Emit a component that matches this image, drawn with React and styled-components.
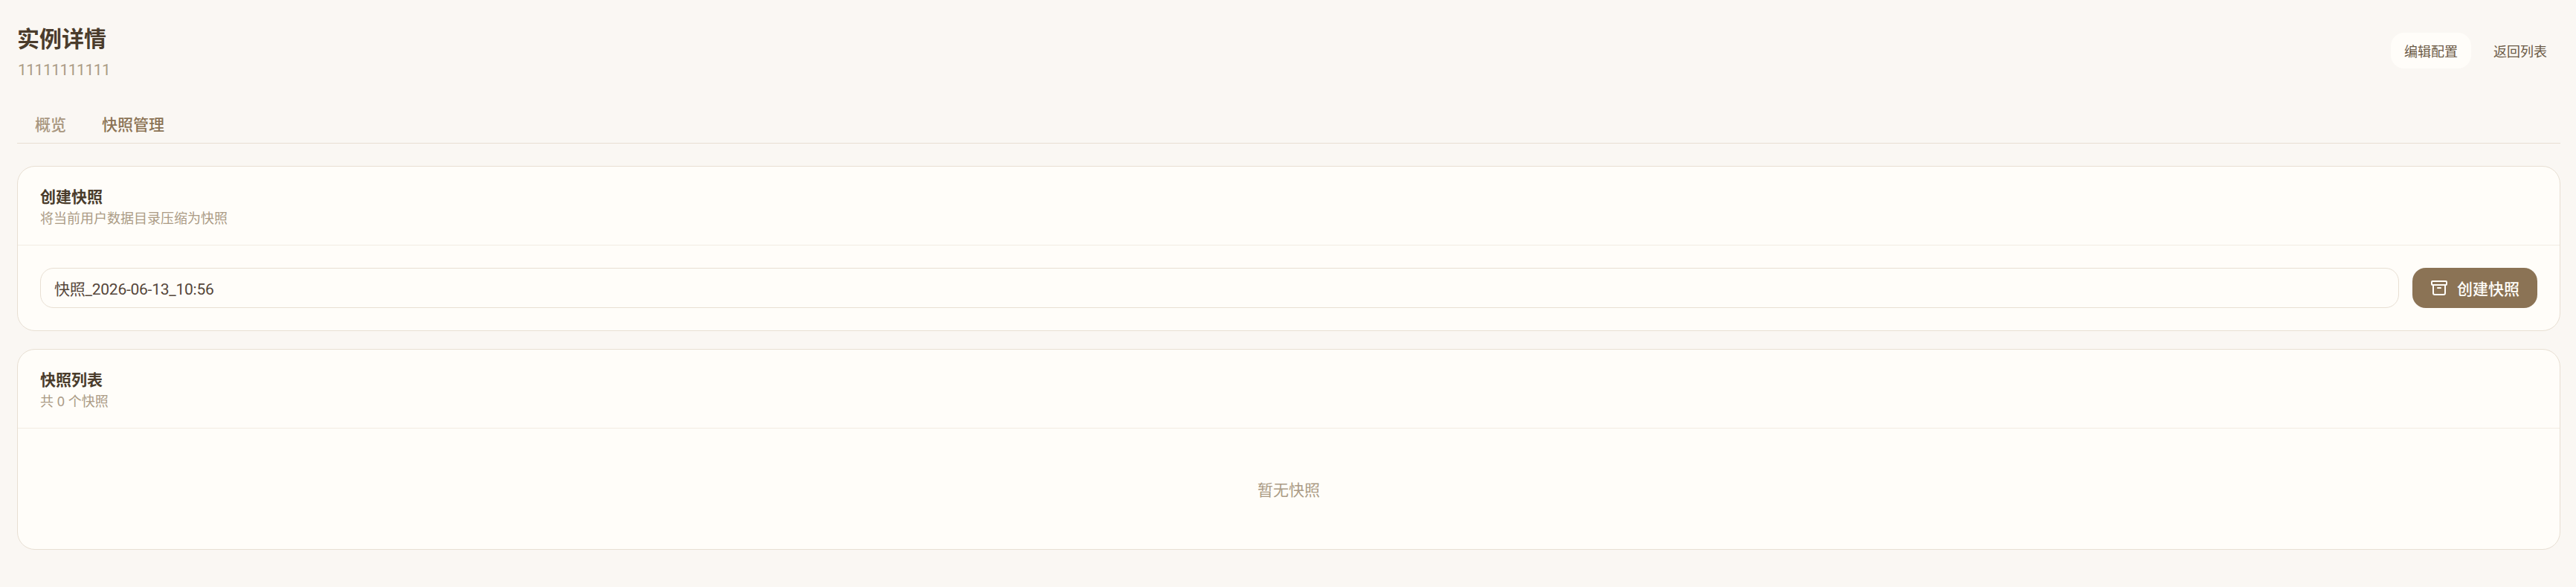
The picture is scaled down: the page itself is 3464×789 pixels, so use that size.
import React from "react";
import styled, { createGlobalStyle } from "styled-components";
import { Archive } from "lucide-react";

const GlobalStyle = createGlobalStyle`
  html, body {
    margin: 0;
    padding: 0;
    background: #faf7f3;
  }
  body {
    font-family: "Noto Sans", "Noto Sans CJK SC", sans-serif;
  }
  * {
    box-sizing: border-box;
  }
`;

const Page = styled.div`
  min-height: 789px;
  padding: 29px 21px 50px 23px;
  background: #faf7f3;
`;

const Header = styled.header`
  display: flex;
  align-items: center;
  justify-content: space-between;
`;

const TitleBlock = styled.div`
  display: flex;
  flex-direction: column;
  gap: 8px;
`;

const Title = styled.h1`
  margin: 0;
  font-size: 30px;
  line-height: 45px;
  font-weight: 700;
  color: #4a3c2c;
`;

const Subtitle = styled.div`
  padding-left: 1px;
  font-family: Roboto, "Noto Sans CJK SC", sans-serif;
  font-size: 21px;
  line-height: 24px;
  letter-spacing: -0.5px;
  color: #ab9b85;
`;

const Actions = styled.div`
  display: flex;
  gap: 12px;
`;

const GhostButton = styled.button`
  height: 48px;
  padding: 0 18px;
  border: none;
  border-radius: 18px;
  background: ${({ $filled }) => ($filled ? "#fffdf9" : "transparent")};
  font-family: inherit;
  font-size: 18px;
  font-weight: 400;
  color: #6b5a45;
`;

const Tabs = styled.nav`
  display: flex;
  height: 53px;
  margin-top: 34px;
  border-bottom: 1px solid #e8dfd3;
`;

const Tab = styled.button`
  height: 52px;
  padding: 0 24px;
  border: none;
  background: transparent;
  font-family: inherit;
  font-size: 21px;
  font-weight: 500;
  color: ${({ $active }) => ($active ? "#8b7355" : "#a8967e")};
`;

const Card = styled.section`
  margin-top: ${({ $first }) => ($first ? "30px" : "24px")};
  background: #fffdf9;
  border: 1px solid #e8dfd3;
  border-radius: 24px;
`;

const CardHead = styled.div`
  padding: 24px 30px 23px;
  border-bottom: 1px solid #f2ece3;
`;

const CardTitle = styled.h2`
  margin: 0;
  font-size: 21px;
  line-height: 32px;
  font-weight: 700;
  color: #4a3c2c;
`;

const CardHint = styled.p`
  margin: 0;
  font-size: 18px;
  line-height: 26px;
  color: #ab9b85;
`;

const FormRow = styled.div`
  display: flex;
  gap: 18px;
  padding: 30px;
`;

const NameInput = styled.input`
  flex: 1;
  height: 54px;
  padding: 0 18px;
  border: 1px solid #e8dfd3;
  border-radius: 18px;
  outline: none;
  background: #fffdf9;
  font-family: Roboto, "Noto Sans CJK SC", sans-serif;
  font-size: 21px;
  letter-spacing: -0.25px;
  color: #55463a;
`;

const CreateButton = styled.button`
  display: flex;
  align-items: center;
  gap: 12px;
  height: 54px;
  padding: 0 24px;
  border: none;
  border-radius: 18px;
  background: #8b7355;
  font-family: inherit;
  font-size: 21px;
  font-weight: 500;
  color: #fffdf9;
`;

const Empty = styled.div`
  display: flex;
  align-items: center;
  justify-content: center;
  height: 162px;
  font-size: 21px;
  color: #ab9b85;
`;

export default function App() {
  return (
    <Page>
      <GlobalStyle />
      <Header>
        <TitleBlock>
          <Title>实例详情</Title>
          <Subtitle>11111111111</Subtitle>
        </TitleBlock>
        <Actions>
          <GhostButton $filled>编辑配置</GhostButton>
          <GhostButton>返回列表</GhostButton>
        </Actions>
      </Header>

      <Tabs>
        <Tab>概览</Tab>
        <Tab $active>快照管理</Tab>
      </Tabs>

      <Card $first>
        <CardHead>
          <CardTitle>创建快照</CardTitle>
          <CardHint>将当前用户数据目录压缩为快照</CardHint>
        </CardHead>
        <FormRow>
          <NameInput defaultValue="快照_2026-06-13_10:56" />
          <CreateButton>
            <Archive size={24} strokeWidth={2} />
            创建快照
          </CreateButton>
        </FormRow>
      </Card>

      <Card>
        <CardHead>
          <CardTitle>快照列表</CardTitle>
          <CardHint>共 0 个快照</CardHint>
        </CardHead>
        <Empty>暂无快照</Empty>
      </Card>
    </Page>
  );
}
